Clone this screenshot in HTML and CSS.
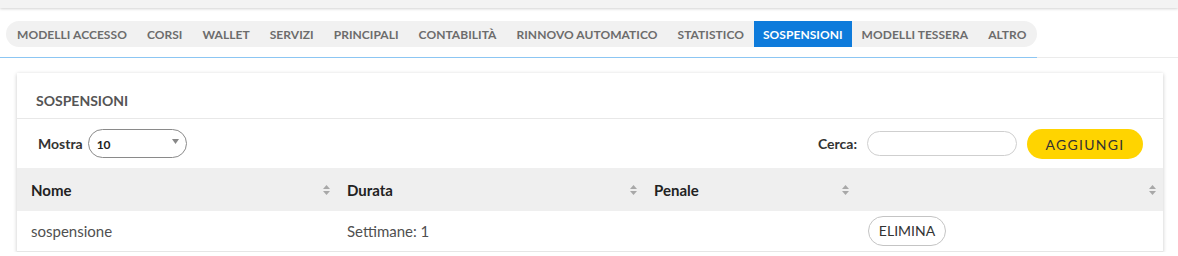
FILE: index.html
```html
<!DOCTYPE html>
<html lang="it">
<head>
<meta charset="utf-8">
<title>Sospensioni</title>
<link rel="stylesheet" href="styles.css">
</head>
<body>
<div class="topbar"></div>
<div class="navwrap">
  <div class="navline">
    <ul class="tabs">
      <li class="tab">MODELLI ACCESSO</li>
      <li class="tab">CORSI</li>
      <li class="tab">WALLET</li>
      <li class="tab">SERVIZI</li>
      <li class="tab">PRINCIPALI</li>
      <li class="tab">CONTABILITÀ</li>
      <li class="tab">RINNOVO AUTOMATICO</li>
      <li class="tab">STATISTICO</li>
      <li class="tab active">SOSPENSIONI</li>
      <li class="tab">MODELLI TESSERA</li>
      <li class="tab">ALTRO</li>
    </ul>
  </div>
</div>

<section class="card">
  <div class="card-head">SOSPENSIONI</div>
  <div class="controls">
    <label class="show">Mostra
      <span class="select"><span class="sel-val">10</span>
        <svg class="sel-arrow" width="7" height="5" viewBox="0 0 7 5"><path d="M0 0h7L3.5 5z" fill="#888"/></svg>
      </span>
    </label>
    <div class="right">
      <label class="search">Cerca: <input type="text" class="search-input"></label>
      <button class="btn-add">AGGIUNGI</button>
    </div>
  </div>
  <table class="grid">
    <colgroup>
      <col class="c1"><col class="c2"><col class="c3"><col class="c4">
    </colgroup>
    <thead>
      <tr>
        <th><div class="th-in"><span>Nome</span><svg class="sort" width="7" height="10" viewBox="0 0 7 10"><path d="M3.5 0L7 4H0z M3.5 10L0 6h7z" fill="#a8a8a8"/></svg></div></th>
        <th><div class="th-in"><span>Durata</span><svg class="sort" width="7" height="10" viewBox="0 0 7 10"><path d="M3.5 0L7 4H0z M3.5 10L0 6h7z" fill="#a8a8a8"/></svg></div></th>
        <th><div class="th-in"><span>Penale</span><svg class="sort" width="7" height="10" viewBox="0 0 7 10"><path d="M3.5 0L7 4H0z M3.5 10L0 6h7z" fill="#a8a8a8"/></svg></div></th>
        <th><div class="th-in"><span></span><svg class="sort" width="7" height="10" viewBox="0 0 7 10"><path d="M3.5 0L7 4H0z M3.5 10L0 6h7z" fill="#a8a8a8"/></svg></div></th>
      </tr>
    </thead>
    <tbody>
      <tr>
        <td>sospensione</td>
        <td>Settimane: 1</td>
        <td></td>
        <td><button class="btn-del">ELIMINA</button></td>
      </tr>
    </tbody>
  </table>
</section>
</body>
</html>
```

FILE: styles.css
```css
* { box-sizing: border-box; }
html, body { margin: 0; padding: 0; background: #fff; }
body { font-family: "Lato", "Liberation Sans", sans-serif; color: #444; }

.topbar {
  height: 8px;
  background: #f3f3f3;
  box-shadow: 0 1px 3px rgba(0,0,0,0.18);
}

.navwrap {
  display: flex;
  margin-top: 13px;
  box-shadow: inset 0 -1px 0 #ebebeb;
}
.navline {
  padding: 0 0 11px 6px;
  box-shadow: inset 0 -1px 0 #8cc6f3;
}
.tabs {
  list-style: none;
  margin: 0;
  padding: 0;
  display: flex;
  background: #f1f1f1;
  border-radius: 13px;
  overflow: hidden;
  height: 26px;
}
.tab {
  padding: 0 10px;
  font-size: 12px;
  font-weight: 700;
  letter-spacing: 0.05px;
  color: #6c6c6c;
  line-height: 27px;
  white-space: nowrap;
}
.tab:first-child { padding-left: 11px; }
.tab:last-child { padding-right: 11px; }
.tab.active { background: #0e7bdb; color: #fff; padding: 0 9px; }

.card {
  margin: 15px 15px 0 17px;
  background: #fff;
  box-shadow: 0 1px 4px rgba(0,0,0,0.22);
}
.card-head {
  height: 46px;
  padding: 19px 19px 0;
  font-size: 14px;
  font-weight: 700;
  color: #555;
  border-bottom: 1px solid #e8e8e8;
  line-height: 17px;
}

.controls {
  display: flex;
  justify-content: space-between;
  align-items: center;
  padding: 9px 20px 9px 21px;
  height: 49px;
}
.show {
  display: flex;
  align-items: center;
  gap: 5px;
  font-size: 14px;
  font-weight: 700;
  color: #333;
}
.select {
  display: inline-flex;
  align-items: center;
  justify-content: space-between;
  width: 99px;
  height: 29px;
  border: 1px solid #8a8a8a;
  border-radius: 15px;
  padding: 2px 7px 0 8px;
}
.sel-val { font-size: 12px; font-weight: 700; color: #222; }
.sel-arrow { margin-top: -6px; }

.right { display: flex; align-items: center; }
.search {
  display: flex;
  align-items: center;
  gap: 10px;
  font-size: 14px;
  font-weight: 700;
  color: #333;
}
.search-input {
  width: 150px;
  height: 25px;
  border: 1px solid #cfcfcf;
  border-radius: 13px;
  outline: none;
  padding: 0 10px;
  font: inherit;
}
.btn-add {
  margin-left: 10px;
  width: 116px;
  height: 30px;
  border: none;
  border-radius: 15px;
  background: #ffd400;
  color: #333;
  font-family: "Lato", sans-serif;
  font-size: 14px;
  letter-spacing: 1.3px;
  padding: 1px 0 0;
}

.grid {
  width: 100%;
  border-collapse: collapse;
  table-layout: fixed;
}
.c1 { width: 320px; }
.c2 { width: 307px; }
.c3 { width: 212px; }
.grid thead tr { background: #efefef; }
.grid th {
  height: 43px;
  padding: 0 7px 0 10px;
  text-align: left;
  font-size: 15px;
  font-weight: 700;
  color: #222;
}
.grid th:first-child, .grid td:first-child { padding-left: 14px; }
.th-in { display: flex; justify-content: space-between; align-items: center; }
.grid td {
  height: 40px;
  padding: 0 10px;
  font-size: 15px;
  color: #505050;
  border-bottom: 1px solid #e6e6e6;
}
.btn-del {
  margin-left: 2px;
  height: 30px;
  width: 78px;
  border: 1px solid #c4c4c4;
  border-radius: 15px;
  background: #fff;
  color: #333;
  font-family: "Lato", sans-serif;
  font-size: 14px;
  padding: 0;
}
```
